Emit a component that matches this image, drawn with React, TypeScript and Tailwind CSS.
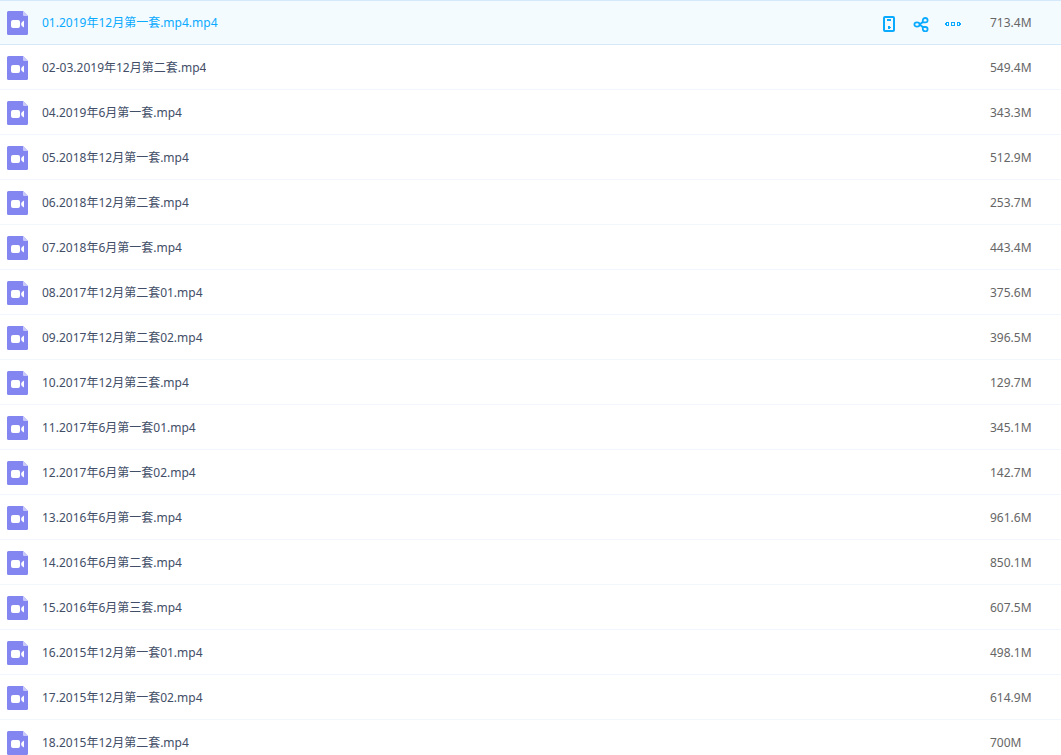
import React, { useState } from "react"
import clsx from "clsx"

interface FileItem {
  name: string
  size: string
}

const files: FileItem[] = [
  { name: "01.2019年12月第一套.mp4.mp4", size: "713.4M" },
  { name: "02-03.2019年12月第二套.mp4", size: "549.4M" },
  { name: "04.2019年6月第一套.mp4", size: "343.3M" },
  { name: "05.2018年12月第一套.mp4", size: "512.9M" },
  { name: "06.2018年12月第二套.mp4", size: "253.7M" },
  { name: "07.2018年6月第一套.mp4", size: "443.4M" },
  { name: "08.2017年12月第二套01.mp4", size: "375.6M" },
  { name: "09.2017年12月第二套02.mp4", size: "396.5M" },
  { name: "10.2017年12月第三套.mp4", size: "129.7M" },
  { name: "11.2017年6月第一套01.mp4", size: "345.1M" },
  { name: "12.2017年6月第一套02.mp4", size: "142.7M" },
  { name: "13.2016年6月第一套.mp4", size: "961.6M" },
  { name: "14.2016年6月第二套.mp4", size: "850.1M" },
  { name: "15.2016年6月第三套.mp4", size: "607.5M" },
  { name: "16.2015年12月第一套01.mp4", size: "498.1M" },
  { name: "17.2015年12月第一套02.mp4", size: "614.9M" },
  { name: "18.2015年12月第二套.mp4", size: "700M" },
]

function VideoFileIcon() {
  return (
    <svg viewBox="0 0 21 24" className="h-6 w-[21px] shrink-0" aria-hidden="true">
      <path d="M1.5 0H16l5 5v17.5a1.5 1.5 0 0 1-1.5 1.5h-18A1.5 1.5 0 0 1 0 22.5v-21A1.5 1.5 0 0 1 1.5 0z" fill="#8385f0" />
      <path d="M16 0l5 5h-4a1 1 0 0 1-1-1z" fill="#c9caf9" />
      <rect x="4" y="9" width="9" height="8" rx="2" fill="#fff" />
      <path d="M17 9.500v7q-3-1.500-3-3.500t3-3.500z" fill="#fff" />
    </svg>
  )
}

function PhoneIcon() {
  return (
    <svg viewBox="0 0 16 16" className="h-4 w-4" fill="none" aria-hidden="true">
      <rect x="3" y="1" width="10" height="14" rx="1" stroke="#09aaff" strokeWidth="2" />
      <path d="M6 3h4v2H6zM7 10h2v1h1v1H9v1H7z" fill="#09aaff" />
    </svg>
  )
}

function ShareIcon() {
  return (
    <svg viewBox="0 0 16 16" className="h-4 w-4" fill="none" stroke="#09aaff" strokeWidth="1.8" aria-hidden="true">
      <ellipse cx="4" cy="8.500" rx="2.600" ry="2.100" />
      <path d="M9.800 6V4.200Q10.200 2 12.300 2t2.300 2.200-2.300 2.200H9.800z" />
      <path d="M9.800 11h2.500q2.300 0 2.300 2.200t-2.300 2.200-2.500-2.200z" />
      <path d="M6.500 8.500L9.800 6M6.500 8.500L9.800 11" />
    </svg>
  )
}

function MoreIcon() {
  return (
    <svg viewBox="0 0 16 16" className="h-4 w-4" fill="none" stroke="#09aaff" aria-hidden="true">
      <rect x="1.5" y="6.5" width="2" height="3" />
      <rect x="6.5" y="6.5" width="3" height="3" />
      <rect x="12.5" y="6.5" width="2" height="3" />
      <path d="M0 8h1M15 8h1" strokeWidth="2" />
    </svg>
  )
}

const actions = [
  { label: "下载到手机", icon: <PhoneIcon /> },
  { label: "分享", icon: <ShareIcon /> },
  { label: "更多", icon: <MoreIcon /> },
]

interface FileRowProps {
  file: FileItem
  active: boolean
  onHover: () => void
}

function FileRow({ file, active, onHover }: FileRowProps) {
  // 每行都保留上边框，悬停时内容不会跳动
  const cell = clsx(
    "border-y p-0",
    active ? "border-[#d4eafb] bg-[#f4fbff]" : "border-t-transparent border-b-[#f2f6fd]"
  )

  return (
    <tr onMouseEnter={onHover} className="h-[45px]">
      <td className={cell}>
        <div className="flex items-center gap-3.5 pl-[7px]">
          <VideoFileIcon />
          <a href="#" className={clsx("truncate", active ? "text-[#09aaff]" : "text-[#424e67]")}>
            {file.name}
          </a>
        </div>
      </td>
      <td className={clsx(cell, "w-[109px]")}>
        {active && (
          <div className="flex items-center gap-4 pt-0.5">
            {actions.map((action) => (
              <button key={action.label} type="button" aria-label={action.label} className="cursor-pointer">
                {action.icon}
              </button>
            ))}
          </div>
        )}
      </td>
      <td className={clsx(cell, "w-[71px] text-[#666]")}>{file.size}</td>
    </tr>
  )
}

export default function App() {
  const [activeIndex, setActiveIndex] = useState(0)

  return (
    <main className="h-screen overflow-hidden bg-white font-['Noto_Sans','Noto_Sans_CJK_SC',sans-serif] text-xs">
      <table className="w-full border-separate border-spacing-0">
        <tbody>
          {files.map((file, index) => (
            <FileRow
              key={file.name}
              file={file}
              active={index === activeIndex}
              onHover={() => setActiveIndex(index)}
            />
          ))}
        </tbody>
      </table>
    </main>
  )
}
